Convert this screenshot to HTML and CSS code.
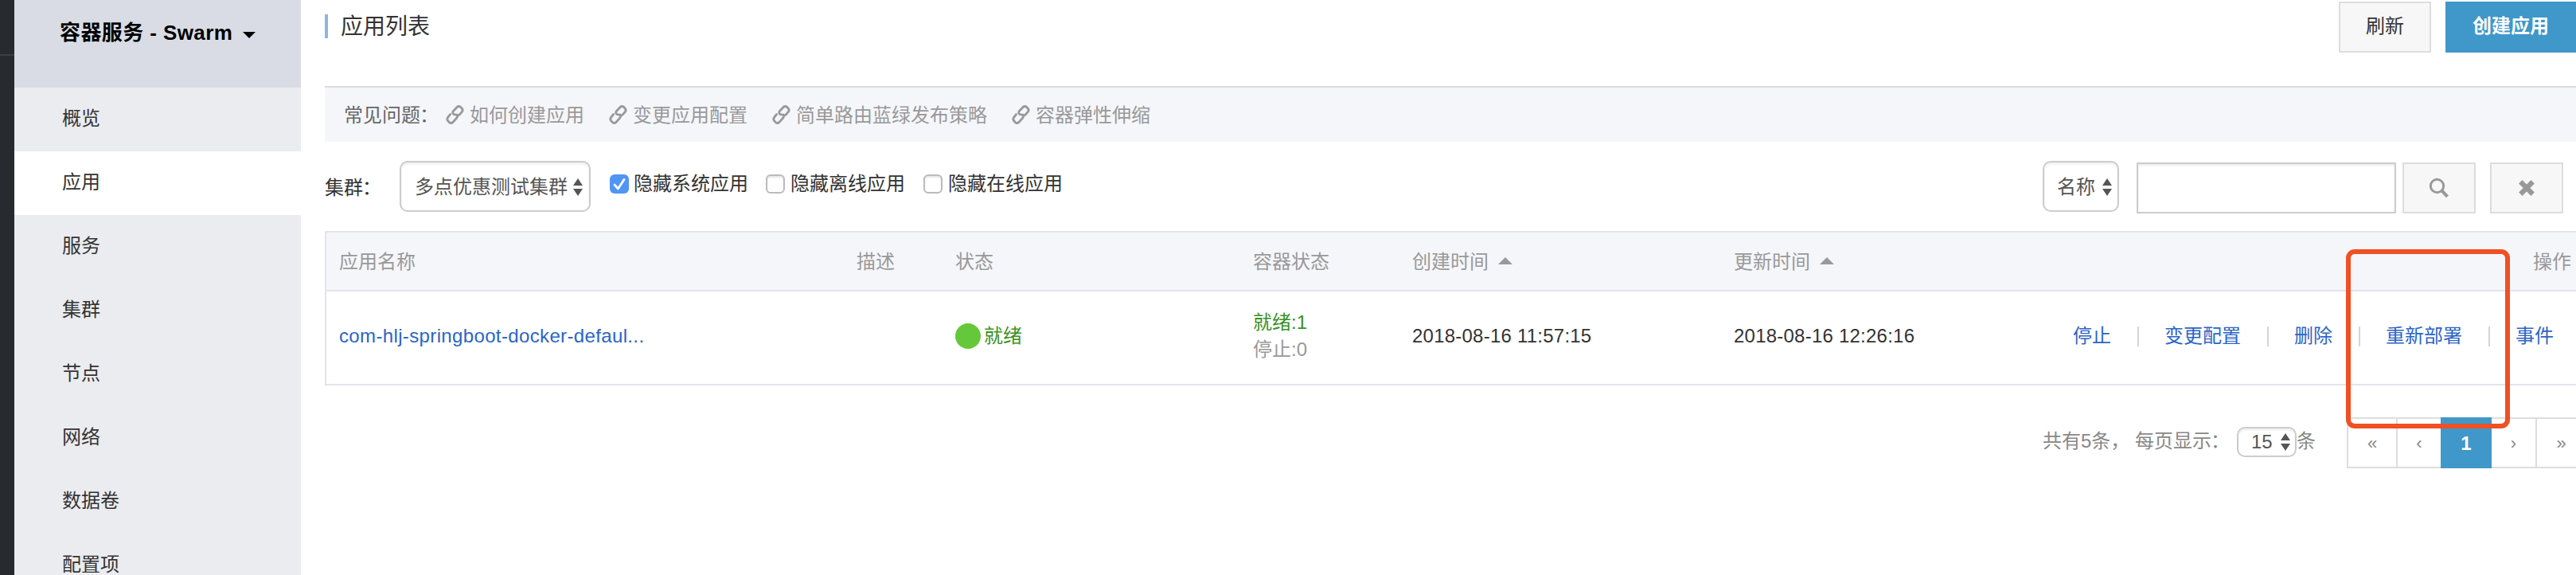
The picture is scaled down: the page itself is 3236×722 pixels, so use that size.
FILE: index.html
```html
<!DOCTYPE html>
<html lang="zh-CN">
<head>
<meta charset="utf-8">
<title>应用列表</title>
<link rel="stylesheet" href="styles.css">
</head>
<body>
<svg class="defs" width="0" height="0" aria-hidden="true">
  <symbol id="link" viewBox="0 0 24 26">
    <g fill="none" stroke="currentColor" stroke-width="3" stroke-linecap="round" stroke-linejoin="round">
      <path d="M15 13.4 L10.6 12.6 Q8 10.8 9.8 8.4 L14.8 3 Q17 1 19.4 3 L21 4.6 Q23 6.8 21.2 9.2 L17.6 13.4"/>
      <path d="M5.8 12.6 L2.8 16.4 Q0.9 19 3 21.4 L4.6 23 Q7 25 9.4 22.8 L14.2 17.4 Q16 15 15 13.4"/>
    </g>
  </symbol>
  <symbol id="updown" viewBox="0 0 12 22">
    <path fill="currentColor" d="M6 0 L12 9 H0 Z M0 13 H12 L6 22 Z"/>
  </symbol>
</svg>
<div class="app">
  <div class="rail"></div>
  <nav class="side">
    <div class="product">容器服务 - Swarm<i class="caret"></i></div>
    <a class="item">概览</a>
    <a class="item active">应用</a>
    <a class="item">服务</a>
    <a class="item">集群</a>
    <a class="item">节点</a>
    <a class="item">网络</a>
    <a class="item">数据卷</a>
    <a class="item">配置项</a>
  </nav>
  <main class="main">
    <header class="head">
      <h1 class="title">应用列表</h1>
      <button class="btn refresh">刷新</button>
      <button class="btn primary">创建应用</button>
    </header>
    <div class="faq">
      <span class="faq-label">常见问题<span class="colon">：</span></span>
      <a class="faq-link"><svg class="link"><use href="#link"/></svg>如何创建应用</a>
      <a class="faq-link"><svg class="link"><use href="#link"/></svg>变更应用配置</a>
      <a class="faq-link"><svg class="link"><use href="#link"/></svg>简单路由蓝绿发布策略</a>
      <a class="faq-link"><svg class="link"><use href="#link"/></svg>容器弹性伸缩</a>
    </div>
    <div class="filters">
      <span class="cluster-label">集群<span class="colon">：</span></span>
      <div class="select cluster">多点优惠测试集群<svg class="updown"><use href="#updown"/></svg></div>
      <div class="checks">
        <label class="check"><span class="box on"><svg viewBox="0 0 24 24"><path d="M6 13 L10.4 18 L18 6.5" fill="none" stroke="#fff" stroke-width="2.8" stroke-linecap="round" stroke-linejoin="round"/></svg></span>隐藏系统应用</label>
        <label class="check"><span class="box"></span>隐藏离线应用</label>
        <label class="check"><span class="box"></span>隐藏在线应用</label>
      </div>
      <div class="search">
        <div class="select field">名称<svg class="updown"><use href="#updown"/></svg></div>
        <div class="input"></div>
        <button class="icon-btn"><svg width="26" height="26" viewBox="0 0 26 26"><circle cx="10.5" cy="10.5" r="8.2" fill="none" stroke="#999" stroke-width="3"/><path d="M16.5 16.5 L23.5 23.8" stroke="#999" stroke-width="4"/></svg></button>
        <button class="icon-btn clear"><svg width="20" height="20" viewBox="0 0 20 20"><path d="M2.3 2.3 L17.7 17.7 M17.7 2.3 L2.3 17.7" stroke="#999" stroke-width="6.2"/></svg></button>
      </div>
    </div>
    <section class="table">
      <div class="row thead">
        <span>应用名称</span><span>描述</span><span>状态</span><span>容器状态</span>
        <span>创建时间<i class="sort"></i></span><span>更新时间<i class="sort"></i></span>
        <span class="ops-head">操作</span>
      </div>
      <div class="row tbody">
        <a class="name">com-hlj-springboot-docker-defaul...</a>
        <span></span>
        <span class="status"><i class="dot"></i>就绪</span>
        <span class="counts"><b class="ready">就绪:1</b><b class="stopped">停止:0</b></span>
        <span class="time">2018-08-16 11:57:15</span>
        <span class="time">2018-08-16 12:26:16</span>
        <span class="ops"><a>停止</a><i></i><a>变更配置</a><i></i><a>删除</a><i></i><a>重新部署</a><i></i><a>事件</a></span>
      </div>
    </section>
    <footer class="foot">
      <span class="total">共有5条， 每页显示<span class="colon">：</span></span>
      <div class="select size">15<svg class="updown"><use href="#updown"/></svg></div>
      <span class="unit">条</span>
      <div class="pager">
        <a class="pg first">«</a><a class="pg prev">‹</a><a class="pg current">1</a><a class="pg next">›</a><a class="pg last">»</a>
      </div>
    </footer>
  </main>
  <div class="marker"></div>
</div>
</body>
</html>
```
FILE: styles.css
```css
* { box-sizing: border-box; }
body {
  margin: 0;
  font: 24px/34px "Liberation Sans", "Noto Sans CJK SC", sans-serif;
  color: #333;
  background: #fff;
}
i { font-style: normal; }
button { font: inherit; }
.defs { position: absolute; }
.colon { margin-left: -1px; }
.app { position: relative; display: flex; width: 3236px; height: 722px; overflow: hidden; }

.rail { flex: none; width: 18px; height: 722px; background: linear-gradient(#3d3f44, #3d3f44) 0 68px / 18px 2px no-repeat #272a2f; }
.side { flex: none; width: 360px; height: 722px; overflow: hidden; background: #ebecf0; }
.product { display: flex; align-items: center; height: 110px; padding: 0 0 29px 57px; background: #d9dce4; color: #000; font-size: 26px; font-weight: bold; letter-spacing: .4px; white-space: pre; }
.caret { margin: 6px 0 0 13px; border: 8px solid transparent; border-top-color: #000; border-bottom: 0; }
.item { display: flex; align-items: center; height: 80px; padding: 0 0 2px 60px; }
.item.active { background: #fff; }

.main { flex: none; width: 2828px; margin-left: 30px; }
.head { display: flex; height: 108px; padding-top: 2px; }
.title { height: 30px; margin: 16px auto 0 0; padding-left: 16px; border-left: 4px solid #8fb5dd; font-size: 28px; font-weight: normal; line-height: 32px; }
.btn { height: 64px; padding: 0 0 3px; border: 2px solid #ddd; background: #f7f7f7; color: #333; }
.refresh { width: 116px; margin-right: 18px; }
.primary { width: 164px; padding-left: 0; border: 0; background: #4097c9; color: #fff; font-weight: bold; }

.faq { display: flex; align-items: center; height: 70px; padding: 2px 0 0 24px; border-top: 2px solid #ddd; background: #f5f6fa; }
.faq-label { width: 128px; color: #666; }
.faq-link { display: flex; align-items: center; margin-right: 31px; color: #999; }
.link { width: 23px; height: 26px; margin: 0 7px 2px 0; }

.filters { display: flex; height: 112px; padding-top: 24px; }
.cluster-label { width: 94px; padding-top: 17px; }
.select { display: flex; align-items: center; border: 2px solid #ccc; border-radius: 10px; background: #fff; box-shadow: inset 0 2px 3px rgba(0,0,0,.08); color: #555; }
.updown { width: 12px; height: 22px; color: #555; }
.cluster { width: 240px; height: 64px; padding: 2px 0 0 17px; }
.cluster .updown { margin-left: 7px; }
.checks { display: flex; height: 34px; margin: 12px 0 0 24px; }
.check { display: flex; align-items: center; width: 198px; }
.check:first-child { width: 196px; }
.box { width: 24px; height: 24px; margin: 0 7px 0 0; border: 2px solid #bbb; border-radius: 6px; background: #fff; box-shadow: inset 0 2px 2px rgba(0,0,0,.1); }
.box.on { margin-right: 6px; border: 0; background: #4f95f5; box-shadow: none; }
.box svg { display: block; }
.search { display: flex; margin-left: auto; padding-right: 16px; }
.field { width: 96px; height: 64px; padding: 2px 0 0 16px; }
.field .updown { margin-left: 9px; }
.input { width: 326px; height: 64px; margin: 2px 8px 0 22px; border: 2px solid #ccc; box-shadow: inset 0 2px 3px rgba(0,0,0,.08); }
.icon-btn { display: flex; align-items: center; justify-content: center; width: 92px; height: 64px; margin-top: 2px; padding: 0; border: 2px solid #ddd; background: #f7f7f7; }
.clear { margin-left: 18px; }

.table { height: 194px; border: 2px solid #e1e4ea; border-right: 0; }
.row { display: grid; grid-template-columns: 650px 124px 374px 200px 404px 426px 1fr; align-items: center; padding-left: 16px; }
.thead { height: 74px; padding-top: 2px; border-bottom: 2px solid #e1e4ea; background: #f5f6fa; color: #999; }
.sort { display: inline-block; margin: 0 0 5px 12px; border: 9px solid transparent; border-top: 0; border-bottom-color: #999; }
.ops-head { justify-self: end; padding-right: 6px; }
.tbody { height: 116px; padding-bottom: 4px; }
.name, .ops a { color: #2b65c7; }
.name { letter-spacing: .36px; }
.time { letter-spacing: .23px; }
.status { display: flex; align-items: center; color: #3b9125; }
.dot { width: 32px; height: 32px; margin-right: 4px; border-radius: 50%; background: #65c83b; }
.counts { display: flex; flex-direction: column; }
.counts b { font-weight: normal; }
.ready { color: #3b9125; }
.stopped { color: #999; }
.ops { display: flex; align-items: center; }
.ops i { width: 2px; height: 25px; margin: 0 32px 0 33px; background: #d5d5d5; }

.foot { display: flex; align-items: flex-start; height: 104px; padding: 40px 0 0 2158px; color: #888; }
.total { flex: none; width: 244px; padding-top: 13px; white-space: pre; }
.size { flex: none; width: 75px; height: 38px; margin-top: 12px; padding-left: 16px; }
.size .updown { margin-left: 10px; }
.unit { flex: none; width: 63px; padding-top: 13px; }
.pager { display: flex; flex: none; width: 300px; height: 64px; }
.pg { display: flex; align-items: center; justify-content: center; padding-top: 2px; border: 2px solid #ddd; border-right: 0; color: #888; font-size: 22px; }
.first { width: 62px; }
.prev { width: 56px; }
.current { width: 64px; border: 0; background: #4097c9; color: #fff; font-size: 24px; font-weight: bold; }
.next { width: 55px; border-left: 0; }
.last { width: 63px; }

/* highlight frame drawn over the redeploy action */
.marker { position: absolute; left: 2947px; top: 313px; width: 206px; height: 225px; border: 6px solid #f05023; border-radius: 11px; }
```
